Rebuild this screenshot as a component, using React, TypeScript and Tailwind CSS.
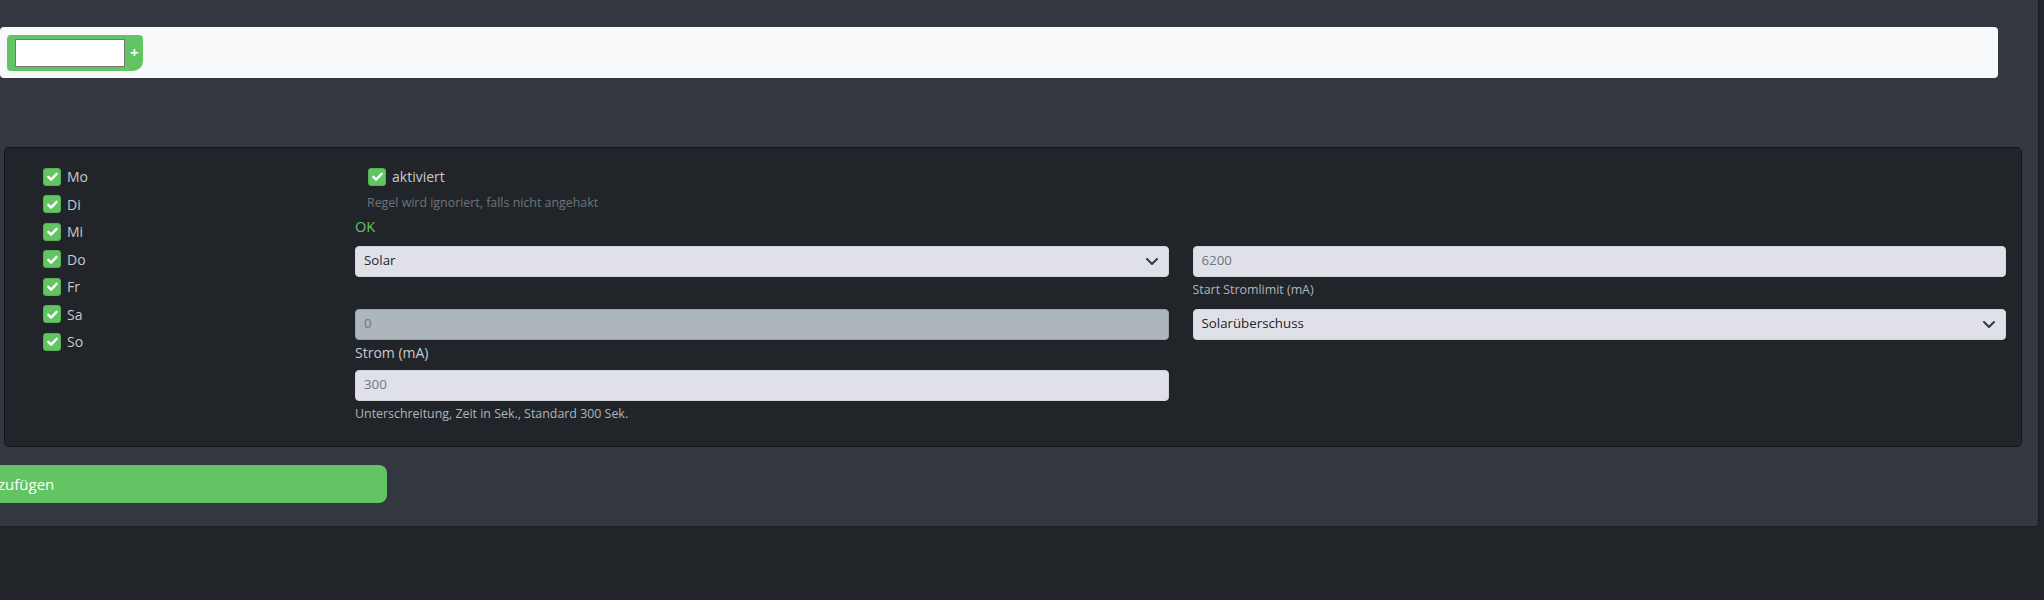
import React from "react";

const days = ["Mo", "Di", "Mi", "Do", "Fr", "Sa", "So"];

function Check() {
  return (
    <span className="flex h-[18px] w-[18px] shrink-0 items-center justify-center rounded-[3px] border border-[#58b058] bg-[#62c462]">
      <svg viewBox="0 0 20 20" className="h-[15px] w-[15px]">
        <path d="M4.5 10.5l3.6 3.6L15.5 6.5" fill="none" stroke="#fff" strokeWidth="3.2" strokeLinecap="round" strokeLinejoin="round" />
      </svg>
    </span>
  );
}

function Field({ value, dark, disabled }: { value: string; dark?: boolean; disabled?: boolean }) {
  return (
    <div
      className={`flex h-[31px] items-center rounded-[4px] border px-[8px] text-[13.3px] ${
        disabled ? "border-[#9aa2aa] bg-[#adb5bd]" : "border-[#d3d5dc] bg-[#e0e1e8]"
      } ${dark ? "text-[#212529]" : "text-[#6c757d]"}`}
    >
      {value}
    </div>
  );
}

function Select({ value }: { value: string }) {
  return (
    <div className="flex h-[31px] items-center justify-between rounded-[4px] border border-[#d3d5dc] bg-[#e0e1e8] pl-[8px] pr-[8px] text-[13.3px] text-[#212529]">
      <span>{value}</span>
      <svg viewBox="0 0 16 16" className="h-[16px] w-[16px]">
        <path d="M3 6l5 5 5-5" fill="none" stroke="#343a40" strokeWidth="2" strokeLinecap="round" strokeLinejoin="round" />
      </svg>
    </div>
  );
}

export default function App() {
  return (
    <div
      className="h-[600px] w-[2044px] overflow-hidden bg-[#212529]"
      style={{ fontFamily: '"Open Sans", "Noto Sans", sans-serif' }}
    >
      <div className="flex h-[527px] w-[2039px] flex-col items-start rounded-br-[4px] border-r border-b border-[#1a1d20] bg-[#33373f] pt-[27px]">
        {/* tag bar */}
        <div className="flex h-[51px] w-[1998px] items-center rounded-[4px] bg-[#f8f9fa] pl-[7px]">
          <div className="flex h-[36px] w-[136px] items-center rounded-[4px] rounded-br-[10px] bg-[#62c462] pl-[8px]">
            <div className="h-[28px] w-[110px] border border-[#767676] bg-white" />
            <span className="ml-[5px] text-[15px] font-bold leading-none text-white">+</span>
          </div>
        </div>

        {/* rule panel */}
        <div className="mt-[69px] ml-[4px] flex h-[300px] w-[2018px] rounded-[5px] border border-[#141619] bg-[#212529] text-[14px] text-[#c6cbd1]">
          <div className="flex w-[350px] flex-col pt-[15px] pl-[38px]">
            {days.map((d) => (
              <div key={d} className="flex h-[27.5px] items-center gap-[6px]">
                <Check />
                <span>{d}</span>
              </div>
            ))}
          </div>

          <div className="flex flex-1 flex-col pt-[15px] pr-[15px]">
            <div className="flex h-[27.5px] items-center gap-[6px] pl-[13px]">
              <Check />
              <span>aktiviert</span>
            </div>
            <div className="mt-[2px] pl-[12px] text-[12.4px] leading-[20px] text-[#6c757d]">
              Regel wird ignoriert, falls nicht angehakt
            </div>
            <div className="mt-[3px] text-[14.5px] leading-[22px] text-[#62c462]">OK</div>

            <div className="mt-[8px] grid grid-cols-2 items-start gap-x-[24px] gap-y-[10px]">
              <Select value="Solar" />
              <div className="flex flex-col">
                <Field value="6200" />
                <div className="mt-[4px] text-[12.4px] leading-[18px] text-[#b0b5bb]">Start Stromlimit (mA)</div>
              </div>

              <div className="flex flex-col">
                <Field value="0" disabled />
                <div className="mt-[2px] leading-[22px]">Strom (mA)</div>
                <div className="mt-[6px]">
                  <Field value="300" />
                </div>
                <div className="mt-[4px] text-[12.4px] leading-[18px] text-[#b0b5bb]">
                  Unterschreitung, Zeit in Sek., Standard 300 Sek.
                </div>
              </div>
              <Select value="Solarüberschuss" />
            </div>
          </div>
        </div>

        <button className="mt-[18px] ml-[-100px] flex h-[38px] w-[487px] items-center rounded-[8px] bg-[#62c462] pl-[74px] text-[15px] text-white">
          Hinzufügen
        </button>
      </div>
    </div>
  );
}
